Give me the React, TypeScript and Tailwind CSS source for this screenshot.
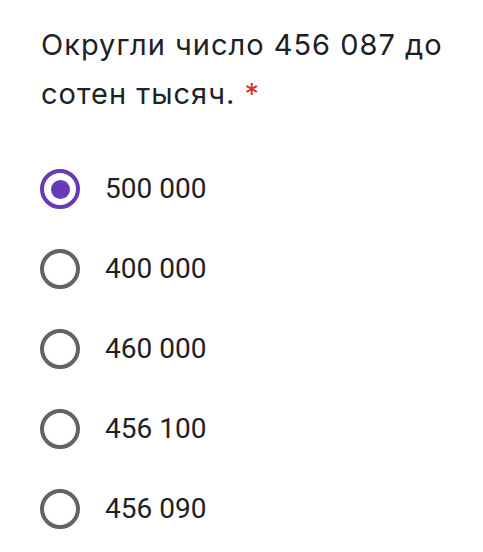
import React from "react";

const options = ["500 000", "400 000", "460 000", "456 100", "456 090"];

function Radio({ checked }: { checked: boolean }) {
  return (
    <div
      className={
        "flex h-[40px] w-[40px] shrink-0 items-center justify-center rounded-full border-[4px] " +
        (checked ? "border-[#673ab7]" : "border-[#5f6368]")
      }
    >
      {checked && <div className="h-[19px] w-[19px] rounded-full bg-[#673ab7]" />}
    </div>
  );
}

export default function App() {
  return (
    <div className="h-[552px] w-[483px] overflow-hidden bg-white pt-[20px]">
      <div
        className="pl-[41px] text-[29px] leading-[49px] tracking-[1px] text-[#202124]"
        style={{ fontFamily: 'Inter, "Open Sans", sans-serif' }}
      >
        Округли число 456 087 до
        <br />
        сотен тысяч. <span className="text-[#d93025]">*</span>
      </div>
      <div className="mt-[51px] flex flex-col gap-[40px] pl-[40px]">
        {options.map((o, i) => (
          <div key={o} className="flex h-[40px] items-center">
            <Radio checked={i === 0} />
            <span
              className="ml-[25px] text-[28px] text-[#202124]"
              style={{ fontFamily: "Roboto, sans-serif" }}
            >
              {o}
            </span>
          </div>
        ))}
      </div>
    </div>
  );
}
